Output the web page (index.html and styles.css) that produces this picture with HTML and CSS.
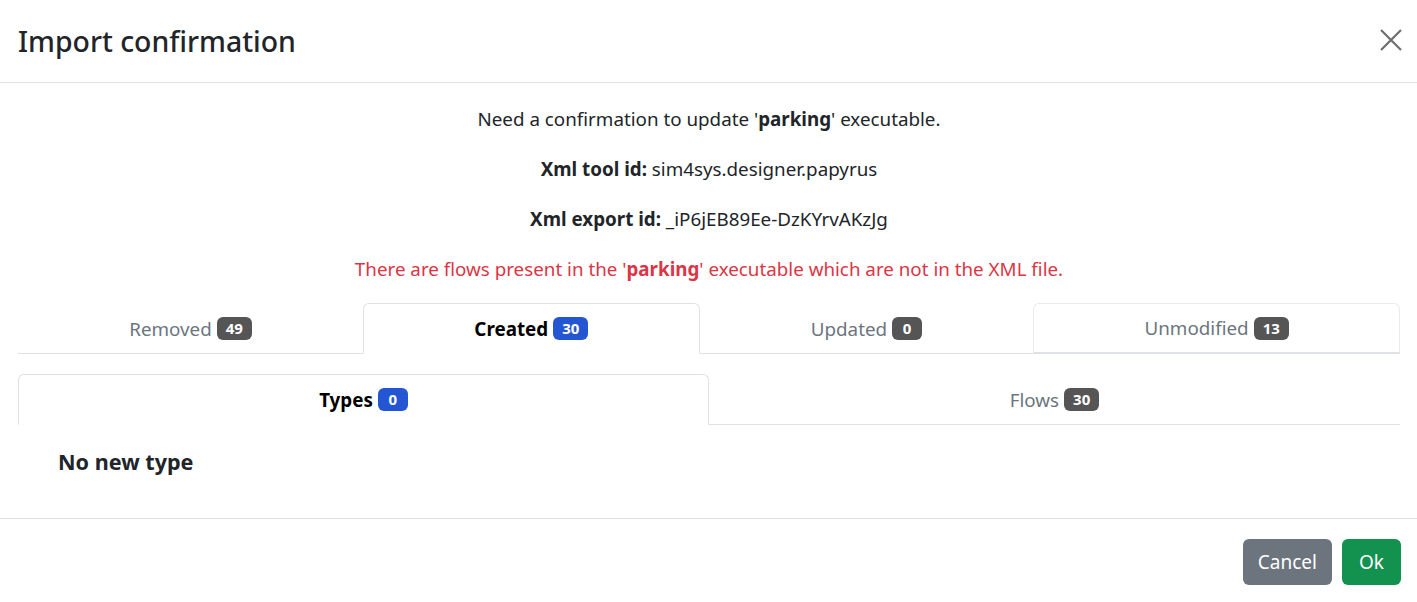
FILE: index.html
```html
<!DOCTYPE html>
<html lang="en">
<head>
    <meta charset="UTF-8">
    <meta name="viewport" content="width=device-width, initial-scale=1.0">
    <title>Import confirmation</title>
    <link rel="stylesheet" href="styles.css">
</head>
<body>
    <div class="modal">
        <div class="modal-header">
            <h4 class="modal-title">Import confirmation</h4>
            <button class="btn-close" aria-label="Close">
                <svg width="22" height="22" viewBox="0 0 22 22">
                    <path d="M1 1 L21 21 M21 1 L1 21" stroke="#6e6e6e" stroke-width="2.2" fill="none"/>
                </svg>
            </button>
        </div>

        <div class="modal-body">
            <div class="summary">
                <p>Need a confirmation to update '<b>parking</b>' executable.</p>
                <p><b>Xml tool id:</b> sim4sys.designer.papyrus</p>
                <p><b>Xml export id:</b> _iP6jEB89Ee-DzKYrvAKzJg</p>
                <p class="warning">There are flows present in the '<b>parking</b>' executable which are not in the XML file.</p>
            </div>

            <ul class="tabs">
                <li class="tab">Removed <span class="badge">49</span></li>
                <li class="tab active">Created <span class="badge blue">30</span></li>
                <li class="tab">Updated <span class="badge">0</span></li>
                <li class="tab hover">Unmodified <span class="badge">13</span></li>
            </ul>

            <ul class="tabs sub">
                <li class="tab active">Types <span class="badge blue">0</span></li>
                <li class="tab">Flows <span class="badge">30</span></li>
            </ul>

            <div class="tab-content">
                <h5>No new type</h5>
            </div>
        </div>

        <div class="modal-footer">
            <button class="btn btn-secondary">Cancel</button>
            <button class="btn btn-success">Ok</button>
        </div>
    </div>
</body>
</html>
```

FILE: styles.css
```css
body {
    font-family: "Noto Sans", "Open Sans", sans-serif;
    color: #212529;
    background: #fff;
    margin: 0;
}

.modal {
    width: 1417px;
    height: 602px;
    background: #fff;
}

.modal-header {
    height: 83px;
    box-sizing: border-box;
    display: flex;
    align-items: center;
    justify-content: space-between;
    padding: 0 15px 0 18px;
    border-bottom: 1px solid #dee2e6;
}

.modal-title {
    margin: 0;
    font-size: 28.4px;
    font-weight: 500;
    line-height: 34px;
}

.btn-close {
    background: none;
    border: none;
    padding: 0;
    width: 22px;
    height: 22px;
    margin-top: -2px;
    cursor: pointer;
}

.modal-body {
    padding: 24px 17px 0 18px;
}

.summary {
    text-align: center;
    font-size: 18.8px;
    line-height: 24px;
}

.summary p {
    margin: 0 0 26px;
}

.summary p.warning {
    color: #dc3545;
    margin-bottom: 22px;
}

.tabs {
    list-style: none;
    margin: 0;
    padding: 0;
    display: flex;
    border-bottom: 1px solid #dee2e6;
}

.tab {
    flex: 1 1 auto;
    height: 49px;
    margin-bottom: -1px;
    display: flex;
    align-items: center;
    justify-content: center;
    gap: 5px;
    font-size: 18.8px;
    color: #6c757d;
    border: 1px solid transparent;
    border-top-left-radius: 6px;
    border-top-right-radius: 6px;
}

.tab.active {
    color: #000;
    font-weight: 700;
    background: #fff;
    border-color: #dee2e6 #dee2e6 #fff;
}

.tab.hover {
    border-color: #e9ecef #e9ecef #dee2e6;
    border-bottom: 2px solid #dee2e6;
    height: 48px;
}

.tabs.sub {
    margin-top: 20px;
}

.tabs.sub .tab {
    flex: 1 1 0;
}

.badge {
    display: inline-block;
    min-width: 12px;
    padding: 4px 9px;
    font-size: 15px;
    font-weight: 700;
    line-height: 15px;
    color: #fff;
    text-align: center;
    background: #555;
    border-radius: 6px;
}

.badge.blue {
    background: #2456d3;
}

.tab-content {
    padding: 22px 40px 0;
    height: 71px;
}

.tab-content h5 {
    margin: 0;
    font-size: 21.6px;
    font-weight: 700;
    line-height: 30px;
}

.modal-footer {
    border-top: 1px solid #dee2e6;
    display: flex;
    justify-content: flex-end;
    gap: 10px;
    padding: 20px 16px 0;
}

.btn {
    font-family: inherit;
    font-size: 19px;
    line-height: 28px;
    padding: 9px 15px;
    border: none;
    border-radius: 6px;
    color: #fff;
    cursor: pointer;
}

.btn-secondary {
    background: #6c757d;
}

.btn-success {
    padding: 9px 17px;
    background: #13914e;
}
```
